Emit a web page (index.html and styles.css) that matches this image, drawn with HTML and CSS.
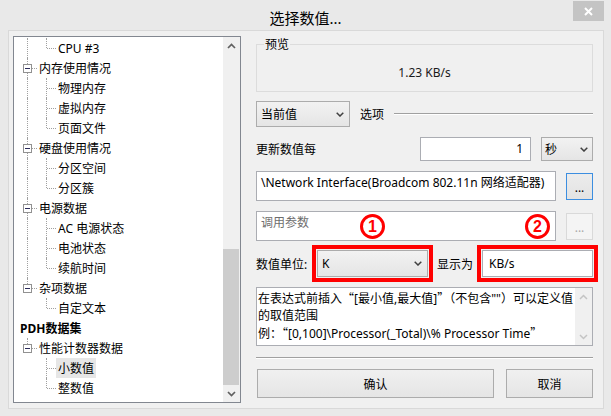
FILE: index.html
```html
<!DOCTYPE html>
<html lang="zh-CN">
<head>
<meta charset="utf-8">
<title>选择数值...</title>
<link rel="stylesheet" href="styles.css">
</head>
<body>
<div class="window">
  <div class="titlebar">
    <div></div>
    <div class="title">选择数值...</div>
    <button class="close" aria-label="关闭"><svg width="9" height="9" viewBox="0 0 9 9"><path d="M1 1L8 8M8 1L1 8" stroke="#fff" stroke-width="2"/></svg></button>
  </div>
  <div class="client">
    <div class="tree">
      <div class="tree-list">
        <div class="row"><span class="c v"></span><span class="c u h"></span><span class="t">CPU #3</span></div>
        <div class="row"><span class="c v h"><span class="box"></span></span><span class="t">内存使用情况</span></div>
        <div class="row"><span class="c v"></span><span class="c v h"></span><span class="t">物理内存</span></div>
        <div class="row"><span class="c v"></span><span class="c v h"></span><span class="t">虚拟内存</span></div>
        <div class="row"><span class="c v"></span><span class="c u h"></span><span class="t">页面文件</span></div>
        <div class="row"><span class="c v h"><span class="box"></span></span><span class="t">硬盘使用情况</span></div>
        <div class="row"><span class="c v"></span><span class="c v h"></span><span class="t">分区空间</span></div>
        <div class="row"><span class="c v"></span><span class="c u h"></span><span class="t">分区簇</span></div>
        <div class="row"><span class="c v h"><span class="box"></span></span><span class="t">电源数据</span></div>
        <div class="row"><span class="c v"></span><span class="c v h"></span><span class="t">AC 电源状态</span></div>
        <div class="row"><span class="c v"></span><span class="c v h"></span><span class="t">电池状态</span></div>
        <div class="row"><span class="c v"></span><span class="c u h"></span><span class="t">续航时间</span></div>
        <div class="row"><span class="c u h"><span class="box"></span></span><span class="t">杂项数据</span></div>
        <div class="row"><span class="c"></span><span class="c u h"></span><span class="t">自定文本</span></div>
        <div class="row root"><span class="t">PDH数据集</span></div>
        <div class="row"><span class="c u h"><span class="box"></span></span><span class="t">性能计数器数据</span></div>
        <div class="row"><span class="c"></span><span class="c v h"></span><span class="t sel">小数值</span></div>
        <div class="row"><span class="c"></span><span class="c u h"></span><span class="t">整数值</span></div>
      </div>
      <div class="vscroll">
        <div class="sb-btn"><svg width="9" height="6" viewBox="0 0 9 6"><path d="M1 5L4.5 1.5L8 5" fill="none" stroke="#606060" stroke-width="1.7"/></svg></div>
        <div class="sb-track"><div class="sb-thumb"></div></div>
        <div class="sb-btn"><svg width="9" height="6" viewBox="0 0 9 6"><path d="M1 1L4.5 4.5L8 1" fill="none" stroke="#606060" stroke-width="1.7"/></svg></div>
      </div>
    </div>

    <div class="panel">
      <div class="group">
        <span class="group-title">预览</span>
        <span class="preview">1.23 KB/s</span>
      </div>

      <div class="row-mode">
        <div class="combo mode"><span>当前值</span><svg width="8" height="5" viewBox="0 0 8 5"><path d="M0.7 0.7L4 4L7.3 0.7" fill="none" stroke="#404040" stroke-width="1.5"/></svg></div>
        <span class="opt-label">选项</span>
        <span class="etched"></span>
      </div>

      <div class="row-update">
        <span class="lbl">更新数值每</span>
        <div class="num">1</div>
        <div class="combo sec"><span>秒</span><svg width="8" height="5" viewBox="0 0 8 5"><path d="M0.7 0.7L4 4L7.3 0.7" fill="none" stroke="#404040" stroke-width="1.5"/></svg></div>
      </div>

      <div class="row-path">
        <div class="edit">\Network Interface(Broadcom 802.11n 网络适配器)</div>
        <button class="dots focus">...</button>
      </div>

      <div class="row-path">
        <div class="edit placeholder">调用参数</div>
        <button class="dots disabled">...</button>
      </div>

      <div class="row-unit">
        <span class="unit-lbl">数值单位:</span>
        <div class="combo unit marked"><span>K</span><svg width="8" height="5" viewBox="0 0 8 5"><path d="M0.7 0.7L4 4L7.3 0.7" fill="none" stroke="#404040" stroke-width="1.5"/></svg></div>
        <span class="show-lbl">显示为</span>
        <div class="show-edit marked">KB/s</div>
      </div>

      <div class="info">
        <div class="info-text">在表达式前插入<span class="fq">“</span>[最小值,最大值]<span class="fq">”</span>（不包含""）可以定义值<br>的取值范围<br>例：<span class="fq">“</span>[0,100]\Processor(_Total)\% Processor Time<span class="fq">”</span></div>
        <div class="info-scroll">
          <div class="sb-btn"><svg width="9" height="6" viewBox="0 0 9 6"><path d="M1 5L4.5 1.5L8 5" fill="none" stroke="#c4c4c4" stroke-width="1.5"/></svg></div>
          <div class="sb-btn"><svg width="9" height="6" viewBox="0 0 9 6"><path d="M1 1L4.5 4.5L8 1" fill="none" stroke="#c4c4c4" stroke-width="1.5"/></svg></div>
        </div>
      </div>

      <div class="sep"></div>

      <div class="buttons">
        <button class="btn ok">确认</button>
        <button class="btn cancel">取消</button>
      </div>

      <span class="badge b1">1</span>
      <span class="badge b2">2</span>
    </div>
  </div>
</div>
</body>
</html>
```

FILE: styles.css
```css
* { box-sizing: border-box; }

body {
  margin: 0;
  font-family: "Noto Sans", "Noto Sans CJK SC", sans-serif;
  font-size: 12px;
  color: #000;
  background: #e9e9e9;
}

button {
  font-family: inherit;
  font-size: 12px;
  color: #000;
  padding: 0;
}

.window {
  width: 611px;
  height: 416px;
  background: #e9e9e9;
  overflow: hidden;
}

.titlebar {
  height: 30px;
  display: grid;
  grid-template-columns: 1fr auto 1fr;
  align-items: start;
}

.title {
  font-size: 15px;
  line-height: 20px;
  padding-top: 8px;
  color: #000;
}

.close {
  justify-self: end;
  margin: 1px 7px 0 0;
  width: 31px;
  height: 20px;
  border: 0;
  background: #c4c4c4;
  display: flex;
  align-items: center;
  justify-content: center;
}

.client {
  margin: 0 7px 0 8px;
  height: 379px;
  background: #f0f0f0;
  border: 1px solid #d9d9d9;
  display: flex;
  padding: 5px 10px 5px 4px;
}

/* ---------- tree ---------- */
.tree {
  width: 228px;
  height: 367px;
  flex: none;
  border: 1px solid #828790;
  background: #fff;
  display: flex;
}

.tree-list {
  flex: 1;
  padding-left: 4px;
  padding-top: 1px;
}

.row {
  display: flex;
  height: 20px;
  align-items: center;
  white-space: nowrap;
}

.c {
  width: 19px;
  height: 20px;
  flex: none;
  position: relative;
}

.c.v::before,
.c.u::before {
  content: "";
  position: absolute;
  left: 9px;
  top: 0;
  bottom: 0;
  border-left: 1px dotted #a0a0a0;
}

.c.u::before { bottom: 10px; }

.c.h::after {
  content: "";
  position: absolute;
  left: 10px;
  right: 0;
  top: 10px;
  border-top: 1px dotted #a0a0a0;
}

.box {
  position: absolute;
  left: 5px;
  top: 6px;
  width: 9px;
  height: 9px;
  border: 1px solid #919191;
  background: #fff;
  z-index: 1;
}

.box::after {
  content: "";
  position: absolute;
  left: 1px;
  top: 3px;
  width: 5px;
  height: 1px;
  background: #2a2a5a;
}

.t {
  padding: 1px 2px 0;
  line-height: 19px;
  height: 20px;
}

.t.sel { background: #e6e6e6; }

.root .t { font-weight: bold; }

.vscroll {
  width: 17px;
  flex: none;
  background: #f0f0f0;
  display: flex;
  flex-direction: column;
}

.sb-btn {
  height: 17px;
  flex: none;
  display: flex;
  align-items: center;
  justify-content: center;
}

.sb-track {
  flex: 1;
  display: flex;
  flex-direction: column;
  justify-content: flex-end;
}

.sb-thumb {
  height: 136px;
  margin-right: 1px;
  background: #cdcdcd;
}

/* ---------- right panel ---------- */
.panel {
  width: 337px;
  flex: none;
  margin-left: 15px;
  display: flex;
  flex-direction: column;
  position: relative;
}

.group {
  margin-top: 8px;
  height: 48px;
  border: 1px solid #dcdcdc;
  position: relative;
  display: flex;
  align-items: center;
  justify-content: center;
  padding-top: 9px;
}

.group-title {
  position: absolute;
  left: 7px;
  top: -8px;
  line-height: 16px;
  padding: 0 1px;
  background: #f0f0f0;
}

.preview { line-height: 16px; color: #1a1a1a; }

.combo {
  border: 1px solid #acacac;
  background: linear-gradient(#f2f2f2, #e5e5e5);
  display: flex;
  align-items: center;
  justify-content: space-between;
  padding: 0 5px 0 4px;
}

.row-mode {
  margin-top: 9px;
  height: 26px;
  display: flex;
  align-items: center;
}

.combo.mode { width: 94px; height: 26px; }

.opt-label { margin-left: 10px; }

.etched {
  flex: 1;
  margin-left: 10px;
  border-top: 1px solid #a0a0a0;
  border-bottom: 1px solid #fff;
}

.row-update {
  margin-top: 10px;
  height: 24px;
  display: flex;
  align-items: center;
}

.lbl { flex: 1; }

.num {
  width: 111px;
  height: 24px;
  border: 1px solid #abadb3;
  background: #fff;
  text-align: right;
  padding-right: 7px;
  line-height: 22px;
}

.combo.sec {
  width: 52px;
  height: 24px;
  margin-left: 10px;
  padding: 0 4px 0 3px;
}

.row-path {
  margin-top: 10px;
  height: 30px;
  display: flex;
  align-items: center;
  gap: 10px;
}

.edit {
  width: 300px;
  height: 30px;
  border: 1px solid #abadb3;
  background: #fff;
  padding: 3px 4px;
  line-height: 16px;
  white-space: nowrap;
  overflow: hidden;
}

.edit.placeholder { color: #6d6d6d; }

.dots {
  width: 27px;
  height: 27px;
  line-height: 20px;
  padding-top: 4px;
}

.dots.focus {
  border: 1px solid #3c8ee0;
  background: linear-gradient(#ececec, #e3e3e3);
}

.dots.disabled {
  border: 1px solid #d9d9d9;
  background: #f4f4f4;
  color: #a8a8a8;
}

.row-unit {
  margin-top: 9px;
  height: 27px;
  display: flex;
  align-items: center;
}

.unit-lbl { width: 61px; }

.combo.unit { width: 111px; height: 27px; }

.marked {
  outline: 4px solid #ff0000;
  outline-offset: 1px;
}

.show-lbl {
  width: 54px;
  padding-left: 9px;
}

.show-edit {
  width: 111px;
  height: 27px;
  border: 1px solid #abadb3;
  background: #fff;
  padding-left: 6px;
  line-height: 25px;
}

.info {
  margin-top: 10px;
  height: 59px;
  border: 1px solid #abadb3;
  background: #fff;
  display: flex;
}

.info-text {
  flex: 1;
  padding: 1px 1px;
  line-height: 17px;
  white-space: nowrap;
  overflow: hidden;
}

.fq { font-family: "Noto Sans CJK SC", sans-serif; }

.info-scroll {
  width: 17px;
  flex: none;
  background: #f0f0f0;
  display: flex;
  flex-direction: column;
  justify-content: space-between;
}

.sep {
  margin-top: 11px;
  border-top: 1px solid #a0a0a0;
  border-bottom: 1px solid #fff;
}

.buttons {
  margin-top: 10px;
  display: flex;
}

.btn {
  height: 29px;
  border: 1px solid #acacac;
  background: linear-gradient(#f0f0f0, #e5e5e5);
}

.btn.ok { width: 237px; margin-left: 1px; }
.btn.cancel { width: 87px; margin-left: 12px; }

.badge {
  position: absolute;
  top: 178px;
  width: 25px;
  height: 25px;
  border: 3px solid #ff0000;
  border-radius: 50%;
  color: #ff0000;
  font-family: "Liberation Sans", sans-serif;
  font-weight: bold;
  font-size: 16px;
  line-height: 19px;
  text-align: center;
}

.b1 { left: 104px; }
.b2 { left: 269px; }
```
